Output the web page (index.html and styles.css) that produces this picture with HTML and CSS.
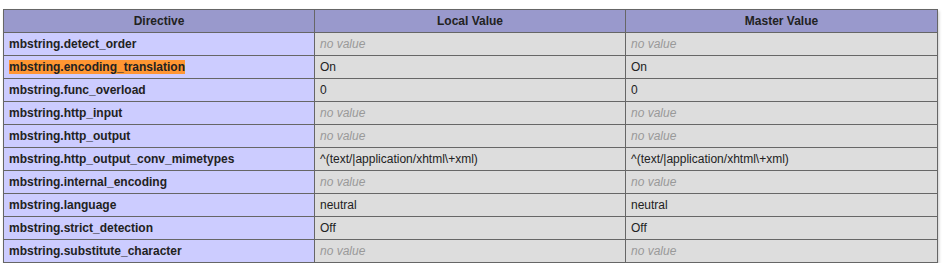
FILE: index.html
```html
<!DOCTYPE html>
<html>
<head>
<meta charset="utf-8">
<link rel="stylesheet" href="styles.css">
</head>
<body>
<table class="info">
<colgroup><col class="c1"><col class="c2"><col class="c3"></colgroup>
<tr class="h"><th>Directive</th><th>Local Value</th><th>Master Value</th></tr>
<tr><td class="e">mbstring.detect_order</td><td class="v"><i>no value</i></td><td class="v"><i>no value</i></td></tr>
<tr><td class="e"><span class="mark">mbstring.encoding_translation</span></td><td class="v">On</td><td class="v">On</td></tr>
<tr><td class="e">mbstring.func_overload</td><td class="v">0</td><td class="v">0</td></tr>
<tr><td class="e">mbstring.http_input</td><td class="v"><i>no value</i></td><td class="v"><i>no value</i></td></tr>
<tr><td class="e">mbstring.http_output</td><td class="v"><i>no value</i></td><td class="v"><i>no value</i></td></tr>
<tr><td class="e">mbstring.http_output_conv_mimetypes</td><td class="v">^(text/|application/xhtml\+xml)</td><td class="v">^(text/|application/xhtml\+xml)</td></tr>
<tr><td class="e">mbstring.internal_encoding</td><td class="v"><i>no value</i></td><td class="v"><i>no value</i></td></tr>
<tr><td class="e">mbstring.language</td><td class="v">neutral</td><td class="v">neutral</td></tr>
<tr><td class="e">mbstring.strict_detection</td><td class="v">Off</td><td class="v">Off</td></tr>
<tr><td class="e">mbstring.substitute_character</td><td class="v"><i>no value</i></td><td class="v"><i>no value</i></td></tr>
</table>
</body>
</html>
```
FILE: styles.css
```css
html, body {
  margin: 0;
  padding: 0;
  background: #fff;
  color: #222;
  font-family: "Liberation Sans", Arial, sans-serif;
}
body {
  padding: 9px 0 0 3px;
}
.info {
  border-collapse: collapse;
  border: 0;
  width: 934px;
  table-layout: fixed;
  box-shadow: 1px 2px 3px #ccc;
}
.c1 { width: 311px; }
.c2 { width: 311px; }
.c3 { width: 312px; }
.info th, .info td {
  border: 1px solid #666;
  font-size: 12px;
  line-height: 14px;
  vertical-align: baseline;
  padding: 4px 5px;
  height: 14px;
  text-align: left;
}
.h th {
  background-color: #99c;
  font-weight: bold;
  text-align: center;
}
.e {
  background-color: #ccf;
  font-weight: bold;
}
.v {
  background-color: #ddd;
  overflow-x: auto;
  word-wrap: break-word;
}
.v i {
  color: #999;
}
.mark {
  background-color: #ff9632;
}
```
